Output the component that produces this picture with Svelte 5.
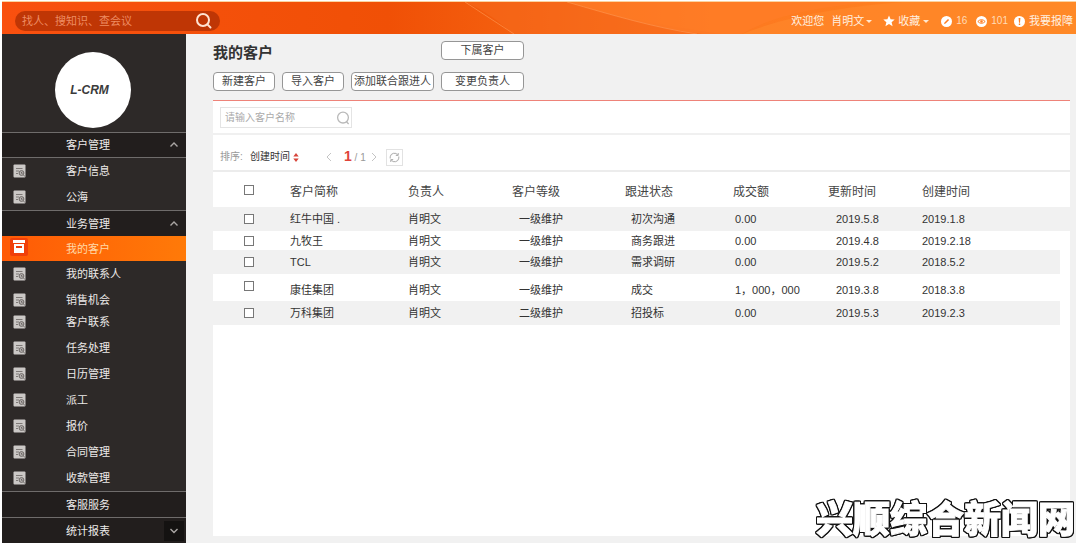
<script>
  const nav = [
    { head: true, label: '客户管理', arrow: 'up' },
    { label: '客户信息' },
    { label: '公海' },
    { head: true, label: '业务管理', arrow: 'up' },
    { label: '我的客户', active: true },
    { label: '我的联系人' },
    { label: '销售机会' },
    { label: '客户联系', compact: true },
    { label: '任务处理' },
    { label: '日历管理' },
    { label: '派工' },
    { label: '报价' },
    { label: '合同管理' },
    { label: '收款管理' },
    { head: true, label: '客服服务' },
    { head: true, label: '统计报表', arrow: 'down' }
  ];

  const columns = ['客户简称', '负责人', '客户等级', '跟进状态', '成交额', '更新时间', '创建时间'];

  const rows = [
    { size: 'r-mid', cells: ['红牛中国 .', '肖明文', '一级维护', '初次沟通', '0.00', '2019.5.8', '2019.1.8'] },
    { size: 'r-low', cells: ['九牧王', '肖明文', '一级维护', '商务跟进', '0.00', '2019.4.8', '2019.2.18'] },
    { size: 'r-mid inset', cells: ['TCL', '肖明文', '一级维护', '需求调研', '0.00', '2019.5.2', '2018.5.2'] },
    { size: 'r-tall', cells: ['康佳集团', '肖明文', '一级维护', '成交', '1，000，000', '2019.3.8', '2018.3.8'] },
    { size: 'r-mid inset', cells: ['万科集团', '肖明文', '二级维护', '招投标', '0.00', '2019.5.3', '2019.2.3'] }
  ];
</script>

<div class="page">
  <header>
    <svg class="swoosh" viewBox="0 0 1074 32" preserveAspectRatio="none" aria-hidden="true">
      <path d="M463 0 C485 10 498 20 510 32 L720 32 C660 24 600 12 565 0Z" fill="#f66a1e" opacity=".55" />
      <path d="M565 0 C610 13 650 25 700 32 L740 32 C770 14 810 6 870 0Z" fill="#ff7d28" opacity=".7" />
      <path d="M740 32 C790 12 850 4 900 0 L1074 0 V32Z" fill="#ff8c2e" opacity=".5" />
      <path d="M463 0 L512 32 M565 0 C610 13 650 25 695 32" fill="none" stroke="#ff9a55" opacity=".6" />
    </svg>
    <form class="search">
      <input type="text" aria-label="搜索" placeholder="找人、搜知识、查会议" />
      <button type="button" aria-label="搜索">
        <svg width="18" height="18" viewBox="0 0 18 18" fill="none" stroke="#ffe3d2" stroke-width="2">
          <circle cx="8" cy="8" r="6" /><path d="M12.4 12.4 L15.5 15.5" stroke-linecap="round" />
        </svg>
      </button>
    </form>
    <nav class="user">
      <a class="hello" href="#user"><span>欢迎您</span><span>肖明文</span><i class="caret"></i></a>
      <a class="fav" href="#fav">
        <svg width="12" height="12" viewBox="0 0 12 12" fill="#fff"><path d="M6 .5 7.6 4.2 11.7 4.5 8.6 7.2 9.6 11.2 6 9 2.4 11.2 3.4 7.2 .3 4.5 4.4 4.2Z" /></svg>
        <span>收藏</span><i class="caret"></i>
      </a>
      <a class="edit" href="#edit">
        <svg width="11" height="11" viewBox="0 0 11 11"><circle cx="5.5" cy="5.5" r="5.5" fill="#fff" /><path d="M3 8 3.5 6.4 7 2.9 8.1 4 4.6 7.5Z" fill="#ff7d20" /></svg>
        <small>16</small>
      </a>
      <a class="views" href="#views">
        <svg width="11" height="11" viewBox="0 0 11 11"><circle cx="5.5" cy="5.5" r="5.5" fill="#fff" /><path d="M1.8 5.5 Q5.5 1.8 9.2 5.5 Q5.5 9.2 1.8 5.5Z" fill="none" stroke="#ff7d20" /><circle cx="5.5" cy="5.5" r="1.2" fill="#ff7d20" /></svg>
        <small>101</small>
      </a>
      <a href="#report">
        <svg width="11" height="11" viewBox="0 0 11 11"><circle cx="5.5" cy="5.5" r="5.5" fill="#fff" /><path d="M4.6 2 H6.4 L6 6.8 H5Z M4.8 7.6 H6.2 V9 H4.8Z" fill="#ff7d20" /></svg>
        <span>我要报障</span>
      </a>
    </nav>
  </header>

  <div class="body">
    <aside>
      <div class="brand"><div class="logo">L-CRM</div></div>
      <nav>
        {#each nav as item}
          <a href="#nav" class="item" class:head={item.head} class:active={item.active} class:compact={item.compact}>
            {#if item.active}
              <svg class="ico box" width="18" height="18" viewBox="0 0 18 18">
                <rect width="18" height="18" rx="2" fill="#f0400a" />
                <rect x="3" y="2" width="12" height="3" fill="#fff" />
                <path d="M4 6 H14 V15 H4Z" fill="#fff" /><rect x="6" y="8" width="6" height="2" fill="#e8400f" />
              </svg>
            {:else if !item.head}
              <svg class="ico" width="13" height="14" viewBox="0 0 13 14">
                <rect x=".5" y=".5" width="12" height="13" rx="1" fill="#cbc8c6" />
                <path d="M3 4.5 H9.5 M3 7 H6 M3 9.5 H5" stroke="#7d7876" fill="none" />
                <circle cx="8.5" cy="9" r="2.4" fill="#b5b1af" stroke="#6d6866" />
                <path d="M8.5 8 V9.3 H9.6 M10.5 11 L12 12.6" stroke="#6d6866" fill="none" />
              </svg>
            {/if}
            <span>{item.label}</span>
            {#if item.arrow}
              <svg class="arrow" class:down={item.arrow === 'down'} width="20" height="20" viewBox="0 0 20 20" fill="none" stroke="#aaa6a4" stroke-width="1.4">
                {#if item.arrow === 'up'}<path d="M6.5 11.5 L10 8 L13.5 11.5" />{:else}<path d="M6.5 8 L10 11.5 L13.5 8" />{/if}
              </svg>
            {/if}
          </a>
        {/each}
      </nav>
    </aside>

    <main>
      <div class="actions">
        <h1>我的客户</h1>
        <button type="button">下属客户</button>
        <button type="button">新建客户</button>
        <button type="button">导入客户</button>
        <button type="button">添加联合跟进人</button>
        <button type="button">变更负责人</button>
      </div>

      <section class="panel">
        <div class="find">
          <label>
            <input type="text" aria-label="客户名称" placeholder="请输入客户名称" />
            <svg width="14" height="14" viewBox="0 0 14 14" fill="none" stroke="#b9b9b9" stroke-width="1.3"><circle cx="7" cy="6.6" r="5.4" /><path d="M10.3 10.5 L12.6 13" /></svg>
          </label>
        </div>
        <div class="sort">
          <span class="key">排序:</span>
          <button type="button" class="by">创建时间
            <svg width="6" height="9" viewBox="0 0 6 9" fill="#d8453a"><path d="M3 0 L5.7 3.5 H.3Z M3 9 L.3 5.5 H5.7Z" /></svg>
          </button>
          <button type="button" class="step" aria-label="上一页"><svg width="6" height="10" viewBox="0 0 6 10" fill="none" stroke="#c4c4c4"><path d="M5 1 L1 5 L5 9" /></svg></button>
          <span class="count"><b>1</b> / 1</span>
          <button type="button" class="step" aria-label="下一页"><svg width="6" height="10" viewBox="0 0 6 10" fill="none" stroke="#c4c4c4"><path d="M1 1 L5 5 L1 9" /></svg></button>
          <button type="button" class="reload" aria-label="刷新">
            <svg width="11" height="11" viewBox="0 0 11 11" fill="none" stroke="#aaa"><path d="M1.2 6.5 V4.8 A4.2 4.2 0 0 1 8.8 3 M9.8 4.5 V6.2 A4.2 4.2 0 0 1 2.2 8 M9.2 1 V3.4 H6.8 M1.8 10 V7.6 H4.2" /></svg>
          </button>
        </div>
        <table>
          <colgroup><col class="c0" /><col class="c1" /><col class="c2" /><col class="c3" /><col class="c4" /><col class="c5" /><col class="c6" /><col /></colgroup>
          <thead>
            <tr>
              <th><input type="checkbox" aria-label="全选" /></th>
              {#each columns as c}<th scope="col">{c}</th>{/each}
            </tr>
          </thead>
          <tbody>
            {#each rows as r}
              <tr class={r.size}>
                <td><input type="checkbox" aria-label={r.cells[0]} /></td>
                {#each r.cells as c}<td>{c}</td>{/each}
              </tr>
            {/each}
          </tbody>
        </table>
      </section>
    </main>
  </div>
  <div class="mark">兴顺综合新闻网</div>
</div>

<style>
  :global(body) { margin: 0; background: #fff; }
  .page, .page * { box-sizing: border-box; }
  .page {
    position: relative;
    display: flex;
    flex-direction: column;
    min-height: 100vh;
    padding: 1px 4px 7px 2px;
    font: 11px/16px "Liberation Sans", "Noto Sans CJK SC", sans-serif;
    color: #444;
  }
  button, input { font: inherit; color: inherit; }
  button { padding: 0; border: 0; background: none; }
  a { color: inherit; text-decoration: none; }
  svg { display: block; flex: none; }

  header {
    position: relative;
    display: flex;
    align-items: center;
    justify-content: space-between;
    height: 33px;
    padding: 6px 3px 0 13px;
    border-top: 1px solid #fbd3a0;
    background: linear-gradient(90deg, #f9500f 0, #f05006 36%, #f4600f 48%, #fd7820 66%, #ff8620 100%);
  }
  .swoosh { position: absolute; inset: 0; width: 100%; height: 100%; }
  .search {
    position: relative;
    display: flex;
    align-items: center;
    width: 205px;
    height: 20px;
    padding: 0 7px;
    border-radius: 10px;
    background: #bf3605;
  }
  .search input { flex: 1; min-width: 0; padding: 0; border: 0; outline: 0; background: none; color: #fff; }
  .search input::placeholder { color: #ee8c62; opacity: 1; }
  .user { position: relative; display: flex; align-items: center; color: #fff0e0; white-space: nowrap; }
  .user a { display: flex; align-items: center; gap: 4px; }
  .user small { font-size: 10px; color: #ffdcb8; }
  .user .hello { gap: 2px; margin-right: 11px; }
  .user .hello span + span { margin-left: 5px; }
  .user .fav { gap: 3px; margin-right: 12px; }
  .user .edit { margin-right: 9px; }
  .user .views { margin-right: 6px; }
  .caret { border: 3px solid transparent; border-top-color: #ffe8d0; border-bottom: 0; }

  .body { display: flex; flex: 1; background: #f1f1f1; }
  aside { width: 184px; flex: none; background: #2d2928; color: #eceae9; }
  .brand { display: flex; justify-content: center; align-items: flex-end; height: 98px; padding: 0 2px 4px 0; }
  .logo {
    display: flex;
    align-items: center;
    justify-content: center;
    width: 76px;
    height: 76px;
    padding-right: 7px;
    border-radius: 50%;
    background: #fff;
    color: #3a3a3a;
    font-size: 12px;
    font-weight: bold;
    font-style: italic;
  }
  .item { display: flex; align-items: center; height: 26px; padding: 0 2px 0 64px; }
  .item span { flex: 1; }
  .item.head { border-top: 1px solid #6f6c6b; background: #221e1d; }
  .item.head:first-child { border-bottom: 1px solid #6f6c6b; }
  .item.active { height: 25px; background: linear-gradient(90deg, #ff5a06, #ff7a08); color: #ffd9a8; }
  .item.compact { height: 22px; padding-bottom: 4px; }
  .ico { margin: 0 40px 0 -53px; }
  .ico.box { margin: 0 38px 4px -56px; }
  .arrow.down { background: #141211; }

  main { display: flex; flex: 1; flex-direction: column; min-width: 0; padding: 7px 6px 7px 27px; }
  .actions {
    display: grid;
    grid-template-columns: 62px 62px 83px 83px;
    grid-auto-rows: 19px;
    gap: 12px 7px;
    padding-bottom: 9px;
  }
  h1 { grid-column: span 3; margin: 0; color: #333; font-size: 15px; line-height: 24px; font-weight: bold; }
  .actions button { border: 1px solid #969696; border-radius: 4px; background: #fff; line-height: 17px; white-space: nowrap; }
  .panel { flex: 1; border-top: 1px solid #ee8379; background: #fff; }
  .find { padding: 6px 7px 5px; border-bottom: 2px solid #f0f0f0; }
  .find label { display: flex; align-items: center; width: 132px; height: 21px; padding: 0 1px 0 4px; border: 1px solid #e4e4e4; }
  .find input { flex: 1; min-width: 0; padding: 0; border: 0; outline: 0; font-size: 10px; }
  .find input::placeholder { color: #aaa; opacity: 1; }
  .sort { display: flex; align-items: center; height: 37px; padding: 9px 7px 0; border-bottom: 2px solid #ececec; font-size: 10px; }
  .key { width: 30px; color: #999; }
  .by { display: flex; align-items: center; gap: 3px; margin-right: 27px; color: #333; }
  .count { margin: 0 5px 0 12px; color: #999; white-space: pre; }
  .count b { color: #e0443a; font-size: 14px; }
  .reload { display: flex; align-items: center; justify-content: center; width: 17px; height: 17px; margin-left: 9px; border: 1px solid #e2e2e2; }

  table { width: 100%; table-layout: fixed; border-collapse: separate; border-spacing: 0; }
  .c0 { width: 77px; }
  .c1 { width: 118px; }
  .c2 { width: 104px; }
  .c3 { width: 113px; }
  .c4 { width: 108px; }
  .c5 { width: 95px; }
  .c6 { width: 94px; }
  th, td { padding: 0; text-align: left; white-space: nowrap; }
  th { height: 35px; padding-top: 4px; font-size: 12px; font-weight: normal; }
  td { color: #333; }
  th:first-child, td:first-child { padding: 0 0 0 31px; }
  td:nth-child(4) { padding-left: 7px; }
  td:nth-child(5) { padding-left: 6px; }
  td:nth-child(6) { padding-left: 2px; }
  td:nth-child(7) { padding-left: 8px; }
  .r-mid td { height: 24px; background: #f1f1f1; }
  .r-low td { height: 19px; }
  .r-tall td { height: 27px; padding-top: 5px; }
  .r-tall td:first-child { padding: 0 0 4px 31px; }
  .inset td:last-child { border-right: 10px solid #fff; }
  table input { display: block; appearance: none; width: 10px; height: 10px; margin: 0; border: 1px solid #777; background: #fff; }

  .mark {
    position: absolute;
    right: 5px;
    bottom: 8px;
    color: #fff;
    font: 900 37px/50px "Noto Sans CJK SC", sans-serif;
    -webkit-text-stroke: 1px #fff;
    filter: drop-shadow(1px 0 #111) drop-shadow(-1px 0 #111) drop-shadow(0 1px #111) drop-shadow(0 -1px #111);
    white-space: nowrap;
    pointer-events: none;
  }
</style>
